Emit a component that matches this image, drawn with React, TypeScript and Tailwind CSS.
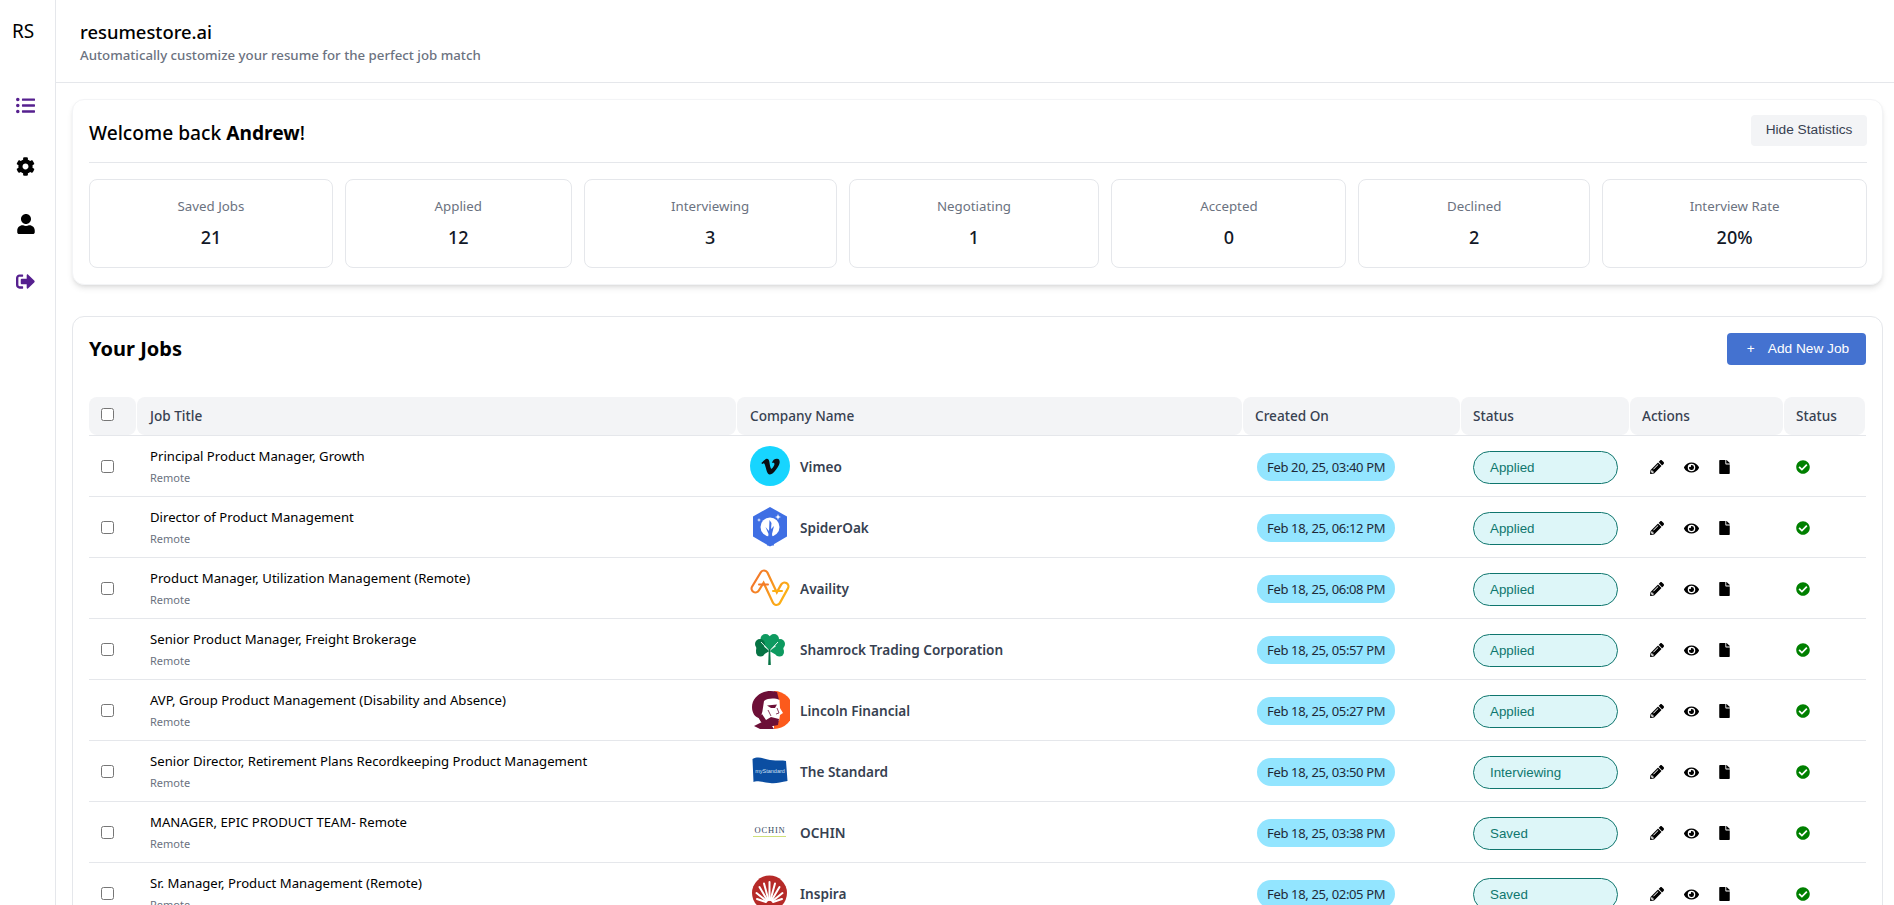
import { FaListUl, FaCog, FaUser, FaSignOutAlt, FaPencilAlt, FaEye, FaFile, FaCheckCircle, FaVimeoV } from 'react-icons/fa';
import { ReactNode } from 'react';

const VimeoLogo = () => (
  <div className="w-10 h-10 rounded-full bg-[#17d5ff] flex items-center justify-center">
    <FaVimeoV className="w-[21px] h-[21px] text-[#0b0f14]" />
  </div>
);

const SpiderOakLogo = () => (
  <svg viewBox="0 0 40 40" className="w-10 h-10">
    <path d="M20 0 L37 9.5 V29.5 L20 39.5 L3 29.5 V9.5 Z" fill="#3f6fe4" />
    <circle cx="20" cy="20" r="9.5" fill="#fff" />
    <path d="M17 38.5 L18.5 27 L15.5 20 L19 24 L19.5 13 L21.5 16 L21 22 L24 19 L22 27 L24 38.5 Z" fill="#3f6fe4" />
    <path d="M28 7 l.8 2.2 2.2.8-2.2.8-.8 2.2-.8-2.2-2.2-.8 2.2-.8 Z M9 11 l.5 1.5 1.5.5-1.5.5-.5 1.5-.5-1.5-1.5-.5 1.5-.5 Z" fill="#fff" />
  </svg>
);

const AvailityLogo = () => (
  <svg viewBox="0 0 40 40" className="w-10 h-10" fill="none" strokeLinejoin="round" strokeLinecap="round">
    <defs>
      <linearGradient id="availity" gradientUnits="userSpaceOnUse" x1="0" y1="10" x2="40" y2="30">
        <stop offset="0" stopColor="#f2702c" />
        <stop offset="1" stopColor="#fdb913" />
      </linearGradient>
    </defs>
    <path d="M5.5 20.5 L14 6.5 L26.5 33 L34.5 18.5" stroke="url(#availity)" strokeWidth="10" />
    <path d="M5.5 20.5 L14 6.5 L26.5 33 L34.5 18.5" stroke="#fff" strokeWidth="5.6" />
    <path d="M9 16.5 H18" stroke="#f47b2a" strokeWidth="2" />
    <path d="M23 23 H32" stroke="#fdb013" strokeWidth="2" />
  </svg>
);

const ShamrockLogo = () => (
  <svg viewBox="0 0 40 40" className="w-10 h-10">
    <g fill="#0e9a60">
      <circle cx="15.5" cy="10" r="5" />
      <circle cx="24" cy="10" r="5" />
      <path d="M11 12 L19.5 23 L28.5 12 L20 7 Z" />
      <circle cx="30" cy="15" r="5" />
      <circle cx="29.5" cy="23" r="4.5" />
      <path d="M33 12 L19.5 22 L28 27 L33.5 22 Z" />
    </g>
    <g fill="#067344">
      <circle cx="10" cy="15" r="5" />
      <circle cx="10.5" cy="23" r="4.5" />
      <path d="M7 12 L19.5 22 L11 27 L6 22 Z" />
    </g>
    <path d="M19.5 22 L28 13 M19.5 22 L11 13" stroke="#fff" strokeWidth="0.9" />
    <path d="M18.8 20 H20.2 L20.8 36 H18.2 Z" fill="#067344" />
  </svg>
);

const LincolnLogo = () => (
  <svg viewBox="0 0 40 40" className="w-10 h-10">
    <path d="M24 1 A19 19 0 0 1 24 39 Z" fill="#fc5a1c" />
    <path d="M27 2 C15 -2 2 6 2 17 C2 23 5 27 9 28 L14 20 L14 12 C18 9 24 9 29 10 Z" fill="#6d0f37" />
    <path d="M14 11 C18 8 25 8 29.5 10 L30 18 L33 23 L30 25 L29 31 L16 30 L12 24 Z" fill="#fff" />
    <path d="M17 15.5 L27 14.5 L25 18 L21 18 Z" fill="#6d0f37" />
    <path d="M27 18 L29 23 L26 24 M18 20 L21 26" fill="none" stroke="#6d0f37" strokeWidth="0.8" />
    <path d="M12 24 L16 30 L21 27 L29 29 L28 35 L18 37 L11 32 L8 27 Z" fill="#6d0f37" />
    <path d="M4 36 L12 32 L22 36 L24 39 L10 39 Z" fill="#6d0f37" />
  </svg>
);

const StandardLogo = () => (
  <svg viewBox="0 0 40 40" className="w-10 h-10">
    <path d="M2.5 8 C8 5 12 7 20 9 C28 10 32 9 36 10 L37.5 30 C30 31 26 33 20 32 C12 31 6 29 3.5 31 Z" fill="#0b4ea2" />
    <text x="20" y="22" textAnchor="middle" fontSize="5.5" fill="#cfe0f5" fontFamily="Liberation Sans, sans-serif">myStandard</text>
  </svg>
);

const OchinLogo = () => (
  <svg viewBox="0 0 40 40" className="w-10 h-10">
    <text x="20" y="21" textAnchor="middle" fontSize="8.5" letterSpacing="0.8" fill="#34495e" fontFamily="Liberation Serif, serif">OCHIN</text>
    <rect x="3" y="24" width="33" height="1" fill="#cfe07a" />
  </svg>
);

const InspiraLogo = () => (
  <svg viewBox="0 0 40 40" className="w-10 h-10">
    <circle cx="19.5" cy="20" r="17.5" fill="#b62a28" />
    <g stroke="#fff" strokeWidth="2" strokeLinecap="round">
      <path d="M19.5 27 L19.5 9" />
      <path d="M18.5 27 L14 10.5" />
      <path d="M20.5 27 L25 10.5" />
      <path d="M17.5 27.5 L9.5 14" />
      <path d="M21.5 27.5 L29.5 14" />
      <path d="M16.5 28 L6.5 20" />
      <path d="M22.5 28 L32.5 20" />
      <path d="M16 29 L7 26" />
      <path d="M23 29 L32 26" />
    </g>
  </svg>
);

type Job = {
  title: string;
  company: string;
  logo: ReactNode;
  created: string;
  status: string;
};

const stats = [
  { label: 'Saved Jobs', value: '21' },
  { label: 'Applied', value: '12' },
  { label: 'Interviewing', value: '3' },
  { label: 'Negotiating', value: '1' },
  { label: 'Accepted', value: '0' },
  { label: 'Declined', value: '2' },
  { label: 'Interview Rate', value: '20%' },
];

const jobs: Job[] = [
  { title: 'Principal Product Manager, Growth', company: 'Vimeo', logo: <VimeoLogo />, created: 'Feb 20, 25, 03:40 PM', status: 'Applied' },
  { title: 'Director of Product Management', company: 'SpiderOak', logo: <SpiderOakLogo />, created: 'Feb 18, 25, 06:12 PM', status: 'Applied' },
  { title: 'Product Manager, Utilization Management (Remote)', company: 'Availity', logo: <AvailityLogo />, created: 'Feb 18, 25, 06:08 PM', status: 'Applied' },
  { title: 'Senior Product Manager, Freight Brokerage', company: 'Shamrock Trading Corporation', logo: <ShamrockLogo />, created: 'Feb 18, 25, 05:57 PM', status: 'Applied' },
  { title: 'AVP, Group Product Management (Disability and Absence)', company: 'Lincoln Financial', logo: <LincolnLogo />, created: 'Feb 18, 25, 05:27 PM', status: 'Applied' },
  { title: 'Senior Director, Retirement Plans Recordkeeping Product Management', company: 'The Standard', logo: <StandardLogo />, created: 'Feb 18, 25, 03:50 PM', status: 'Interviewing' },
  { title: 'MANAGER, EPIC PRODUCT TEAM- Remote', company: 'OCHIN', logo: <OchinLogo />, created: 'Feb 18, 25, 03:38 PM', status: 'Saved' },
  { title: 'Sr. Manager, Product Management (Remote)', company: 'Inspira', logo: <InspiraLogo />, created: 'Feb 18, 25, 02:05 PM', status: 'Saved' },
];

const headers = ['Job Title', 'Company Name', 'Created On', 'Status', 'Actions', 'Status'];

export default function App() {
  return (
    <div className="flex h-screen overflow-hidden bg-white text-black font-['Noto_Sans',sans-serif]">
      <aside className="w-14 shrink-0 border-r border-[#e5e7eb] flex flex-col items-center">
        <div className="h-[82px] pt-[19px] pr-[9px] text-[19px] leading-[24px]">RS</div>
        <div className="flex flex-col items-center gap-[38px] pr-1 pt-[14px]">
          <FaListUl className="w-[19px] h-[19px] text-[#56208f]" />
          <FaCog className="mt-[4px] w-[19px] h-[19px]" />
          <FaUser className="w-[18px] h-[20px]" />
          <FaSignOutAlt className="w-[19px] h-[19px] text-[#56208f]" />
        </div>
      </aside>

      <main className="flex-1 min-w-0">
        <header className="h-[83px] border-b border-[#e5e7eb] pl-6 pt-[19px]">
          <h1 className="text-[18.4px] leading-[25px] font-medium">resumestore.ai</h1>
          <p className="mt-px text-[13.25px] leading-[20px] font-medium text-[#6b7280]">Automatically customize your resume for the perfect job match</p>
        </header>

        <div className="pl-4 pr-[11px] pt-4">
          <section className="bg-white rounded-xl border border-[#f3f4f6] shadow-md pl-4 pr-[15px] pt-[15px] pb-4">
            <div className="flex items-center justify-between pb-4 border-b border-[#e5e7eb]">
              <h2 className="pt-[5px] text-[19.2px] leading-[26px] font-medium">Welcome back <span className="font-bold">Andrew</span>!</h2>
              <button className="h-[31px] w-[116px] rounded bg-[#f3f4f6] font-['Liberation_Sans',sans-serif] text-[13.7px] text-[#374151]">Hide Statistics</button>
            </div>
            <div className="grid grid-cols-[244fr_227fr_253fr_251fr_235fr_232fr_265fr] gap-3 mt-4">
              {stats.map((s) => (
                <div key={s.label} className="h-[89px] rounded-lg border border-[#e5e7eb] flex flex-col items-center pt-[15px]">
                  <span className="text-[13.3px] leading-[22px] text-[#6b7280]">{s.label}</span>
                  <span className="text-lg leading-[28px] mt-[6px] font-medium text-[#111827]">{s.value}</span>
                </div>
              ))}
            </div>
          </section>

          <section className="mt-[31px] rounded-xl border border-[#e5e7eb] px-4 pt-4">
            <div className="flex items-center justify-between mb-8">
              <h2 className="text-xl font-bold">Your Jobs</h2>
              <button className="h-8 w-[139px] rounded bg-[#4472d0] pl-[3px] font-['Liberation_Sans',sans-serif] text-[13.7px] text-white">
                <span className="mr-[13px]">+</span>Add New Job
              </button>
            </div>

            <table className="w-full table-fixed border-collapse">
              <colgroup>
                <col className="w-12" />
                <col className="w-[600px]" />
                <col className="w-[506px]" />
                <col className="w-[218px]" />
                <col className="w-[169px]" />
                <col className="w-[154px]" />
                <col className="w-[82px]" />
              </colgroup>
              <thead>
                <tr className="border-b border-[#e5e7eb]">
                  <th className="p-0">
                    <div className="h-[38px] mr-px rounded-lg bg-[#f3f4f6] pl-3 pt-[11px] flex">
                      <input type="checkbox" className="w-[13px] h-[13px]" />
                    </div>
                  </th>
                  {headers.map((h, i) => (
                    <th key={i} className="p-0 text-left">
                      <div className={`h-[38px] mr-px rounded-lg bg-[#f3f4f6] pr-3 pt-px flex items-center text-[13.6px] font-medium text-[#374151] ${i < 2 ? 'pl-[13px]' : 'pl-3'}`}>{h}</div>
                    </th>
                  ))}
                </tr>
              </thead>
              <tbody>
                {jobs.map((job) => (
                  <tr key={job.title} className="h-[61px] border-b border-[#e5e7eb]">
                    <td className="pl-3">
                      <input type="checkbox" className="block w-[13px] h-[13px]" />
                    </td>
                    <td className="pl-[13px] pr-3">
                      <div className="text-[13.15px] leading-[20px]">{job.title}</div>
                      <div className="text-[11px] leading-[16px] mt-1 text-[#6b7280]">Remote</div>
                    </td>
                    <td className="pl-[13px] pr-3">
                      <div className="flex items-center gap-2.5">
                        {job.logo}
                        <span className="pt-[3px] text-[13.6px] font-semibold text-[#374151]">{job.company}</span>
                      </div>
                    </td>
                    <td className="px-3 pt-0.5">
                      <span className="ml-[2px] inline-block h-7 rounded-full bg-[#93e5ff] px-2.5 text-[13px] tracking-[-0.35px] leading-[28px] text-[#1f2937]">{job.created}</span>
                    </td>
                    <td className="px-3 pt-0.5">
                      <div className="h-[33px] w-[145px] rounded-full border border-[#0f766e] bg-[#ddf6f8] pl-[16px] font-['Liberation_Sans',sans-serif] text-[13.33px] leading-[31px] text-[#0f766e]">{job.status}</div>
                    </td>
                    <td className="pl-5 pt-0.5">
                      <div className="flex items-center gap-5">
                        <FaPencilAlt className="w-[14px] h-[14px]" />
                        <FaEye className="w-[15px] h-[15px]" />
                        <FaFile className="w-[11px] h-[14px]" />
                      </div>
                    </td>
                    <td className="px-3 pt-0.5">
                      <FaCheckCircle className="w-[14px] h-[14px] text-[#008000]" />
                    </td>
                  </tr>
                ))}
              </tbody>
            </table>
          </section>
        </div>
      </main>
    </div>
  );
}
